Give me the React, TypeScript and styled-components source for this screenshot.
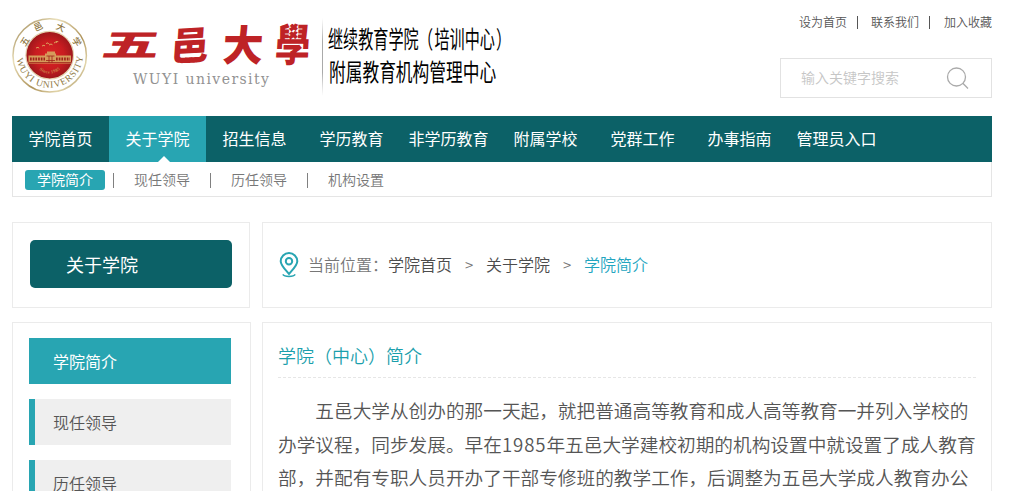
import React from 'react';
import styled, { createGlobalStyle } from 'styled-components';

const teal = '#28a5b2';
const deep = '#0c6167';

const GlobalStyle = createGlobalStyle`
  * { box-sizing: border-box; }
  html, body { margin: 0; height: 491px; overflow: hidden; background: #fff; }
  body { font-family: "Noto Sans CJK SC", sans-serif; font-weight: 350; color: #666; }
  a { color: inherit; text-decoration: none; white-space: nowrap; }
`;

const Page = styled.div`
  width: 980px;
  height: 491px;
  margin-left: 12px;
  overflow: hidden;
`;

const Header = styled.header`
  display: flex;
  justify-content: space-between;
  height: 116px;
`;

const Logo = styled.svg`
  display: block;
  width: 500px;
  height: 110px;
`;

const Tools = styled.div`
  width: 212px;
`;

const TopLinks = styled.div`
  display: flex;
  align-items: center;
  justify-content: flex-end;
  height: 18px;
  margin-top: 13px;
  font-size: 12px;
  line-height: 18px;
  color: #555;
`;

const TopDivider = styled.span<{ $right: number }>`
  width: 1px;
  height: 13px;
  margin: 0 ${p => p.$right}px 0 10px;
  background: #555;
`;

const Search = styled.div`
  display: flex;
  align-items: center;
  justify-content: space-between;
  height: 40px;
  margin-top: 27px;
  padding: 0 22px 2px 20px;
  border: 1px solid #e2e2e2;
  font-size: 14px;
  color: #c6c6c6;
`;

const Nav = styled.nav`
  display: flex;
  height: 46px;
  background: ${deep};
`;

const NavItem = styled.a<{ $active?: boolean }>`
  display: flex;
  justify-content: center;
  position: relative;
  width: 97px;
  font-size: 16px;
  font-weight: 400;
  line-height: 45px;
  color: #fff;
  background: ${p => (p.$active ? teal : 'transparent')};
  &::after {
    content: '';
    display: ${p => (p.$active ? 'block' : 'none')};
    position: absolute;
    left: 49px;
    bottom: 0;
    border: 6px solid transparent;
    border-top: 0;
    border-bottom-color: #fff;
  }
`;

const SubNav = styled.div`
  display: flex;
  align-items: center;
  height: 35px;
  padding: 2px 0 0 12px;
  border: 1px solid #e5e5e5;
  border-top: 0;
  font-size: 14px;
  line-height: 19px;
  color: #777;
`;

const SubItem = styled.a<{ $active?: boolean }>`
  width: 80px;
  height: 20px;
  border-radius: 3px;
  text-align: center;
  font-weight: ${p => (p.$active ? 400 : 'inherit')};
  color: ${p => (p.$active ? '#fff' : 'inherit')};
  background: ${p => (p.$active ? teal : 'transparent')};
`;

const SubDivider = styled.span`
  width: 1px;
  height: 15px;
  margin: 0 8px;
  background: #808080;
`;

const Columns = styled.div<{ $top: number; $height: number }>`
  display: flex;
  justify-content: space-between;
  height: ${p => p.$height}px;
  margin-top: ${p => p.$top}px;
`;

const Panel = styled.section<{ $width: number; $padding: string }>`
  width: ${p => p.$width}px;
  padding: ${p => p.$padding};
  border: 1px solid #ebebeb;
`;

const SideTitle = styled.h2`
  height: 48px;
  margin: 0;
  padding-left: 36px;
  border-radius: 5px;
  background: ${deep};
  font-size: 18px;
  font-weight: 400;
  line-height: 48px;
  color: #fff;
`;

const Breadcrumb = styled.div`
  display: flex;
  align-items: center;
  height: 28px;
  font-size: 16px;
  line-height: 26px;
  color: #777;
`;

const BreadcrumbText = styled.div`
  display: flex;
  height: 28px;
`;

const Pin = styled.svg`
  width: 20px;
  height: 26px;
  margin-right: 9px;
`;

const Crumb = styled.a<{ $current?: boolean }>`
  color: ${p => (p.$current ? '#22a5bf' : '#4c4c4c')};
`;

const Arrow = styled.span`
  width: 34px;
  text-align: center;
  font-size: 15px;
  line-height: 28px;
`;

const SideItem = styled.a<{ $active?: boolean }>`
  display: block;
  height: 46px;
  margin-bottom: 15px;
  padding-left: 18px;
  border-left: 6px solid ${teal};
  background: ${p => (p.$active ? teal : '#efefef')};
  font-size: 16px;
  font-weight: ${p => (p.$active ? 400 : 'inherit')};
  line-height: 46px;
  color: ${p => (p.$active ? '#fff' : '#555')};
`;

const ArticleTitle = styled.h1`
  height: 43px;
  margin: 0;
  font-size: 18px;
  font-weight: 350;
  line-height: 42px;
  color: #1b9fac;
`;

const DashedRule = styled.div`
  height: 1px;
  margin-bottom: 15px;
  background: repeating-linear-gradient(90deg, #e6e6e6 0 3px, transparent 3px 5px);
`;

const Line = styled.div<{ $indent?: boolean }>`
  padding-left: ${p => (p.$indent ? '2em' : '0')};
  font-size: 18.667px;
  line-height: 33.6px;
  white-space: nowrap;
  color: #555;
`;

const Year = styled.span`
  letter-spacing: 0.9px;
`;

const navItems = ['学院首页', '关于学院', '招生信息', '学历教育', '非学历教育', '附属学校', '党群工作', '办事指南', '管理员入口'];
const subItems = ['学院简介', '现任领导', '历任领导', '机构设置'];
const sideItems = ['学院简介', '现任领导', '历任领导'];

function UniversityLogo() {
  return (
    <Logo viewBox="12 0 500 110">
      <defs>
        <linearGradient id="gold" x1="0" y1="0" x2="1" y2="1">
          <stop offset="0" stopColor="#8d7440" />
          <stop offset=".3" stopColor="#eadfb9" />
          <stop offset=".6" stopColor="#ae935a" />
          <stop offset=".8" stopColor="#e2d5aa" />
          <stop offset="1" stopColor="#8d7440" />
        </linearGradient>
        <radialGradient id="red">
          <stop offset="0" stopColor="#dc2425" />
          <stop offset=".6" stopColor="#c81c20" />
          <stop offset="1" stopColor="#9c171b" />
        </radialGradient>
        <linearGradient id="rule" x1="0" y1="0" x2="0" y2="1">
          <stop offset="0" stopColor="#bbb" stopOpacity="0" />
          <stop offset=".3" stopColor="#aaa" />
          <stop offset=".7" stopColor="#aaa" />
          <stop offset="1" stopColor="#bbb" stopOpacity="0" />
        </linearGradient>
        <path id="lowerArc" d="M16.5 57 A33.3 33.3 0 0 0 83 55" />
        <path id="sinceArc" d="M36 67 Q49.5 80 63 67" />
      </defs>
      <circle cx="49.7" cy="55.4" r="36.7" fill="#fff" stroke="url(#gold)" strokeWidth="1.5" />
      <circle cx="49.7" cy="55.2" r="23.8" fill="url(#red)" stroke="#e5d3b0" strokeWidth="1.2" />
      <g fontFamily="'Liberation Serif', serif" fill="#8e7742">
        <text fontSize="9.5">
          <textPath href="#lowerArc" startOffset="2" textLength="98">WUYI UNIVERSITY</textPath>
        </text>
        <text fontSize="4.5" fill="#cc8a4c" fontWeight="700">
          <textPath href="#sinceArc" startOffset="4" textLength="23">Since 1985</textPath>
        </text>
      </g>
      <g fontFamily="'Noto Sans CJK SC', sans-serif" fontSize="9" fontWeight="500" fill="#8e7742" textAnchor="middle">
        <text transform="translate(25 41.5) rotate(-58)" y="3">五</text>
        <text transform="translate(38.4 27) rotate(-25)" y="3">邑</text>
        <text transform="translate(60.5 27.5) rotate(24)" y="3">大</text>
        <text transform="translate(76.5 42) rotate(58)" y="3">学</text>
      </g>
      <g fill="none" stroke="#dda35e" strokeWidth="1">
        <path d="M36 48l2-.7 1.2 1M42 46l2-.8 1 .9M46 43.5l2-.6 1 1M49 45l2-1 1.5.8M54 43l1.8-1 1 .7M56 41.5l2.3.2" />
      </g>
      <path d="M28.5 55.5h16.5v-2h2v-2h8v2h1v2h15v8h-42.5z" fill="#d69b5b" />
      <path d="M30 59h15M56 59h14" stroke="#9e221b" strokeWidth="3.2" strokeDasharray="1.7 1" />
      <path d="M46.5 56h8M46 60.5h9M49 56v7M52 56v7M29 62.5h42" stroke="#9e221b" strokeWidth=".8" />
      <g fontFamily="'Noto Sans CJK SC', sans-serif" fontWeight="900" fill="#be2326" textAnchor="middle">
        <text fontSize="32" transform="translate(129 56) scale(1.8 .96) skewX(-7)">五</text>
        <text fontSize="36" transform="translate(189 60) rotate(-3) scale(1.06 1.08) skewX(-7)">邑</text>
        <text fontSize="39" transform="translate(242 61) scale(1.04 1.08) skewX(-4)">大</text>
        <text fontSize="40" transform="translate(292 61) scale(.87 1.1) skewX(-4)">學</text>
      </g>
      <text x="133" y="84" fontFamily="'DejaVu Serif', serif" fontSize="14" fill="#929292" textLength="136">WUYI university</text>
      <rect x="322" y="18" width="1" height="78" fill="url(#rule)" />
      <g fontFamily="'Noto Sans CJK SC', sans-serif" fill="#000" fontWeight="400">
        <text transform="translate(328 47.5) scale(.63 1)" fontSize="24">继续教育学院</text>
        <text transform="translate(418 47.5) scale(.63 1)" fontSize="24">（</text>
        <text transform="translate(434.5 47.5) scale(.63 1)" fontSize="24">培训中心</text>
        <text transform="translate(496 47.5) scale(.63 1)" fontSize="24">）</text>
        <text transform="translate(329 81) scale(.697 1)" fontSize="24">附属教育机构管理中心</text>
      </g>
    </Logo>
  );
}

export default function App() {
  return (
    <>
      <GlobalStyle />
      <Page>
        <Header>
          <UniversityLogo />
          <Tools>
            <TopLinks>
              <a>设为首页</a>
              <TopDivider $right={13} />
              <a>联系我们</a>
              <TopDivider $right={14} />
              <a>加入收藏</a>
            </TopLinks>
            <Search>
              <span>输入关键字搜索</span>
              <svg width="24" height="24" viewBox="0 0 24 24" fill="none" stroke="#aaa" strokeWidth="1.3">
                <circle cx="11.5" cy="12" r="9" />
                <path d="M17.8 18.3L23 23.5" />
              </svg>
            </Search>
          </Tools>
        </Header>
        <Nav>
          {navItems.map((label, i) => (
            <NavItem key={label} $active={i === 1}>{label}</NavItem>
          ))}
        </Nav>
        <SubNav>
          {subItems.map((label, i) => (
            <React.Fragment key={label}>
              {i > 0 && <SubDivider />}
              <SubItem $active={i === 0}>{label}</SubItem>
            </React.Fragment>
          ))}
        </SubNav>
        <Columns $top={25} $height={86}>
          <Panel $width={238} $padding="17px">
            <SideTitle>关于学院</SideTitle>
          </Panel>
          <Panel $width={730} $padding="28px 16px">
            <Breadcrumb>
              <Pin viewBox="0 0 20 26" fill="none" stroke={teal} strokeWidth="2">
                <path d="M10 22C7.5 18.7 1.7 13.8 1.7 9.3a8.3 8.3 0 0 1 16.6 0C18.3 13.8 12.5 18.7 10 22z" />
                <circle cx="10" cy="9.3" r="3.2" />
                <path d="M3.8 22.4c1.6 2.8 10.8 2.8 12.4 0" strokeWidth="1.5" />
              </Pin>
              <BreadcrumbText>
                <span>当前位置：</span>
                <Crumb>学院首页</Crumb>
                <Arrow>&gt;</Arrow>
                <Crumb>关于学院</Crumb>
                <Arrow>&gt;</Arrow>
                <Crumb $current>学院简介</Crumb>
              </BreadcrumbText>
            </Breadcrumb>
          </Panel>
        </Columns>
        <Columns $top={14} $height={200}>
          <Panel $width={239} $padding="15px 19px 0 16px">
            {sideItems.map((label, i) => (
              <SideItem key={label} $active={i === 0}>{label}</SideItem>
            ))}
          </Panel>
          <Panel $width={730} $padding="11px 15px 0">
            <ArticleTitle>学院（中心）简介</ArticleTitle>
            <DashedRule />
            <Line $indent>五邑大学从创办的那一天起，就把普通高等教育和成人高等教育一并列入学校的</Line>
            <Line>办学议程，同步发展。早在<Year>1985</Year>年五邑大学建校初期的机构设置中就设置了成人教育</Line>
            <Line>部，并配有专职人员开办了干部专修班的教学工作，后调整为五邑大学成人教育办公</Line>
          </Panel>
        </Columns>
      </Page>
    </>
  );
}
